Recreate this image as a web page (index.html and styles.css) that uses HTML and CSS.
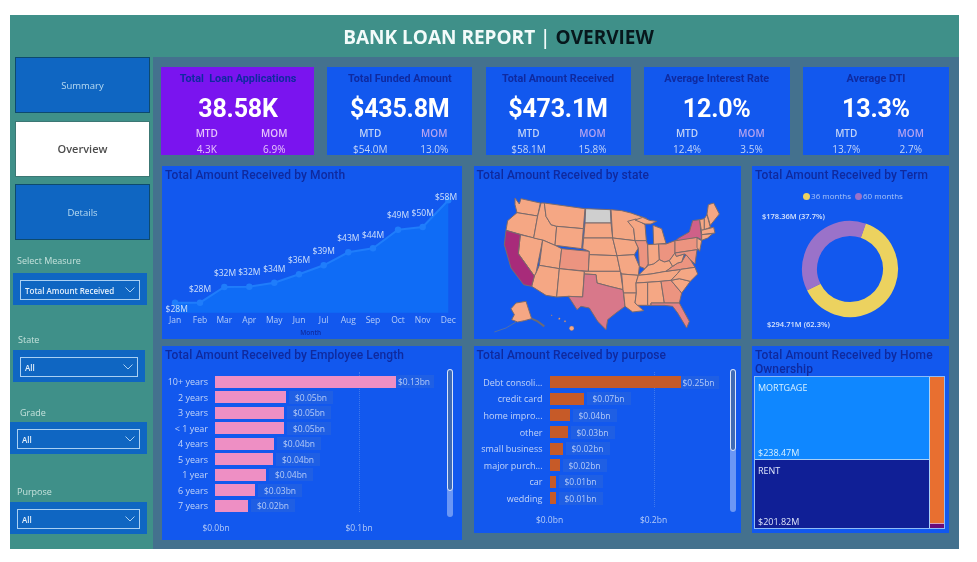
FILE: index.html
```html
<!DOCTYPE html>
<html lang="en">

<head>
    <meta charset="UTF-8">
    <title>Bank Loan Report</title>
    <link rel="stylesheet" href="styles.css">
</head>

<body>
    <div class="report">
        <header class="title-bar">BANK LOAN REPORT <span class="sep">|</span> <span class="title-dark">OVERVIEW</span></header>
        <div class="content">
            <aside class="sidebar">
                <div class="nav-btn">Summary</div>
                <div class="nav-btn active">Overview</div>
                <div class="nav-btn">Details</div>

                <div class="slicer-label measure-label">Select Measure</div>
                <div class="slicer measure-box">
                    <div class="slicer-field"><span>Total Amount Received</span>
                        <svg class="chevron" viewBox="0 0 10 6"><path d="M0.5 0.5 5 5 9.5 0.5"/></svg></div>
                </div>
                <div class="slicer-label state-label">State</div>
                <div class="slicer state-box">
                    <div class="slicer-field"><span>All</span>
                        <svg class="chevron" viewBox="0 0 10 6"><path d="M0.5 0.5 5 5 9.5 0.5"/></svg></div>
                </div>
                <div class="slicer-label grade-label">Grade</div>
                <div class="slicer grade-box">
                    <div class="slicer-field"><span>All</span>
                        <svg class="chevron" viewBox="0 0 10 6"><path d="M0.5 0.5 5 5 9.5 0.5"/></svg></div>
                </div>
                <div class="slicer-label purpose-label">Purpose</div>
                <div class="slicer purpose-box">
                    <div class="slicer-field"><span>All</span>
                        <svg class="chevron" viewBox="0 0 10 6"><path d="M0.5 0.5 5 5 9.5 0.5"/></svg></div>
                </div>
            </aside>

            <main class="main">
                <section class="kpi-row">
                    <div class="kpi kpi-purple">
                        <div class="kpi-title">Total&nbsp; Loan Applications</div>
                        <div class="kpi-value">38.58K</div>
                        <div class="kpi-grid">
                            <span class="mtd">MTD</span><span class="mom">MOM</span>
                            <span class="num">4.3K</span><span class="num">6.9%</span>
                        </div>
                    </div>
                    <div class="kpi">
                        <div class="kpi-title">Total Funded Amount</div>
                        <div class="kpi-value">$435.8M</div>
                        <div class="kpi-grid">
                            <span class="mtd">MTD</span><span class="mom">MOM</span>
                            <span class="num">$54.0M</span><span class="num">13.0%</span>
                        </div>
                    </div>
                    <div class="kpi">
                        <div class="kpi-title">Total Amount Received</div>
                        <div class="kpi-value">$473.1M</div>
                        <div class="kpi-grid">
                            <span class="mtd">MTD</span><span class="mom">MOM</span>
                            <span class="num">$58.1M</span><span class="num">15.8%</span>
                        </div>
                    </div>
                    <div class="kpi">
                        <div class="kpi-title">Average Interest Rate</div>
                        <div class="kpi-value">12.0%</div>
                        <div class="kpi-grid">
                            <span class="mtd">MTD</span><span class="mom">MOM</span>
                            <span class="num">12.4%</span><span class="num">3.5%</span>
                        </div>
                    </div>
                    <div class="kpi">
                        <div class="kpi-title">Average DTI</div>
                        <div class="kpi-value">13.3%</div>
                        <div class="kpi-grid">
                            <span class="mtd">MTD</span><span class="mom">MOM</span>
                            <span class="num">13.7%</span><span class="num">2.7%</span>
                        </div>
                    </div>
                </section>

                <section class="chart-grid">
                    <!-- line chart -->
                    <div class="panel">
                        <h3>Total Amount Received by Month</h3>
                        <svg class="line-chart" viewBox="0 0 300 153">
                            <path class="area" d="M13 114.7 38 114.7 62.3 99 87.3 98.7 112.3 94.7 137 86.3 161.7 77.3 186.3 64.3 211 60.3 236 41.7 260.7 39 286.3 12.3V124.7H13Z"/>
                            <path class="line" d="M13 114.7 38 114.7 62.3 99 87.3 98.7 112.3 94.7 137 86.3 161.7 77.3 186.3 64.3 211 60.3 236 41.7 260.7 39 286.3 12.3"/>
                            <g class="dots">
                                <circle cx="13" cy="114.7" r="3.2"/><circle cx="38" cy="114.7" r="3.2"/><circle cx="62.3" cy="99" r="3.2"/>
                                <circle cx="87.3" cy="98.7" r="3.2"/><circle cx="112.3" cy="94.7" r="3.2"/><circle cx="137" cy="86.3" r="3.2"/>
                                <circle cx="161.7" cy="77.3" r="3.2"/><circle cx="186.3" cy="64.3" r="3.2"/><circle cx="211" cy="60.3" r="3.2"/>
                                <circle cx="236" cy="41.7" r="3.2"/><circle cx="260.7" cy="39" r="3.2"/><circle cx="286.3" cy="12.3" r="3.2"/>
                            </g>
                            <g class="point-labels">
                                <text x="14.7" y="124">$28M</text><text x="38" y="104.3">$28M</text><text x="63" y="88.3">$32M</text>
                                <text x="87.3" y="87">$32M</text><text x="112.3" y="83.7">$34M</text><text x="137" y="75.3">$36M</text>
                                <text x="161.7" y="66">$39M</text><text x="186.3" y="53">$43M</text><text x="211" y="49.7">$44M</text>
                                <text x="236" y="30.3">$49M</text><text x="260.7" y="28.3">$50M</text><text x="284" y="12.3">$58M</text>
                            </g>
                            <g class="month-labels">
                                <text x="13" y="135">Jan</text><text x="38" y="135">Feb</text><text x="62.3" y="135">Mar</text>
                                <text x="87.3" y="135">Apr</text><text x="112.3" y="135">May</text><text x="137" y="135">Jun</text>
                                <text x="161.7" y="135">Jul</text><text x="186.3" y="135">Aug</text><text x="211" y="135">Sep</text>
                                <text x="236" y="135">Oct</text><text x="260.7" y="135">Nov</text><text x="286.3" y="135">Dec</text>
                            </g>
                            <text class="axis-name" x="148.7" y="146.5">Month</text>
                        </svg>
                    </div>

                    <!-- map -->
                    <div class="panel">
                        <h3>Total Amount Received by state</h3>
                        <svg class="us-map" viewBox="0 0 720 450">
                            <path class="aleutian" d="M75 402 45 420 10 432"/>
                            <path class="panhandle" d="M122 392 140 400 160 415"/>
                            <g class="states">
                                <path d="M72 30 85 48 90 32 148 45 140 84 78 74 72 50Z"/>
                                <path d="M78 74 140 84 128 150 45 127 50 98Z"/>
                                <path d="M88 140 155 156 135 255 130 264 82 197Z"/>
                                <path d="M150 45 160 45 165 85 180 110 197 115 192 172 155 156 128 150 140 84Z"/>
                                <path d="M160 45 282 62 277 122 197 115 180 110 165 85Z"/>
                                <path d="M197 115 277 122 272 182 192 172Z"/>
                                <path d="M155 156 192 172 212 182 205 242 145 232Z"/>
                                <path d="M145 232 205 242 197 327 165 322 122 295 130 264 135 255Z"/>
                                <path class="warm" d="M212 182 295 190 292 250 205 242Z"/>
                                <path d="M205 242 280 250 275 327 232 325 197 327Z"/>
                                <path class="none" d="M284 62 358 65 360 105 282 105Z"/>
                                <path d="M282 105 360 105 365 150 278 150Z"/>
                                <path d="M278 150 365 150 378 203 295 200 295 190 275 182Z"/>
                                <path d="M295 200 378 203 388 250 292 250Z"/>
                                <path d="M280 250 388 250 396 305 355 295 318 285 315 260 280 258Z"/>
                                <path class="pink" d="M280 258 315 260 318 285 355 295 396 305 402 355 375 375 350 395 345 425 320 400 295 360 270 355 258 365 232 325 275 327Z"/>
                                <path d="M360 65 392 68 420 75 468 92 432 115 428 122 432 158 365 150Z"/>
                                <path d="M365 150 432 158 442 180 430 200 378 203Z"/>
                                <path d="M378 203 430 200 445 235 442 262 392 258 388 250Z"/>
                                <path d="M392 258 442 262 435 285 436 315 398 315 396 305Z"/>
                                <path d="M398 315 436 315 432 345 440 352 458 368 425 372 402 355Z"/>
                                <path d="M410 100 435 93 462 110 466 158 432 158 428 122Z"/>
                                <path class="warm" d="M432 158 466 158 470 172 472 228 462 242 445 235 442 180Z"/>
                                <path d="M486 112 512 122 525 166 488 170Z"/>
                                <path d="M432 96 455 88 475 97 497 100 480 108 462 108Z"/>
                                <path d="M470 170 503 168 505 215 488 228 472 232Z"/>
                                <path class="warm" d="M503 168 525 168 552 158 552 195 535 218 520 222 505 215Z"/>
                                <path d="M442 262 462 242 472 232 488 228 505 215 520 222 535 218 545 235 525 250 480 258Z"/>
                                <path d="M435 285 442 262 480 258 525 250 570 244 560 256 540 277 510 280Z"/>
                                <path d="M435 285 470 283 470 352 440 352 432 345 436 315Z"/>
                                <path d="M470 283 510 280 520 345 480 345 480 352 470 352Z"/>
                                <path class="warm" d="M510 280 540 277 572 315 565 345 520 345Z"/>
                                <path class="warm2" d="M480 345 520 345 565 345 595 400 587 420 560 375 545 355 520 352 480 352Z"/>
                                <path d="M540 277 565 272 598 280 572 315Z"/>
                                <path class="warm" d="M525 250 545 235 560 225 572 222 585 200 598 215 612 238 570 244Z"/>
                                <path d="M570 244 612 238 620 258 598 280 565 272 540 277 560 256Z"/>
                                <path d="M535 218 552 195 556 205 580 198 572 222 560 225 545 235Z"/>
                                <path class="warm" d="M552 158 560 155 618 148 628 178 618 185 552 195Z"/>
                                <path class="rose" d="M560 152 595 132 605 98 626 95 632 155 618 148 556 158Z"/>
                                <path d="M618 150 632 158 626 190 618 178Z"/>
                                <path class="warm" d="M552 195 618 185 612 228 598 215 585 200 580 198 556 205Z"/>
                                <path d="M626 95 640 92 640 125 631 127Z"/>
                                <path d="M640 92 648 80 658 118 640 125Z"/>
                                <path d="M648 78 652 50 668 45 685 78 658 112Z"/>
                                <path d="M631 127 668 118 672 135 632 140Z"/>
                                <path d="M632 140 665 137 650 150 632 157Z"/>
                                <path class="hot" d="M45 127 88 140 82 197 130 264 122 295 98 290 60 240 40 170Z"/>
                                <path d="M75 345 105 340 122 392 100 398 80 402 62 395 70 380 60 362Z"/>
                                <circle cx="242" cy="421" r="7"/>
                                <circle cx="182" cy="382" r="1.5"/><circle cx="205" cy="392" r="2.5"/><circle cx="222" cy="400" r="2.5"/>
                            </g>
                        </svg>
                    </div>

                    <!-- donut -->
                    <div class="panel">
                        <h3>Total Amount Received by Term</h3>
                        <div class="legend">
                            <span class="legend-dot yellow"></span>36 months
                            <span class="legend-dot purple"></span>60 months
                        </div>
                        <svg class="donut" viewBox="0 0 197 135">
                            <circle class="ring-yellow" cx="98" cy="66" r="40.5" stroke-dasharray="158.5 96" transform="rotate(-71 98 66)"/>
                            <circle class="ring-purple" cx="98" cy="66" r="40.5" stroke-dasharray="96 158.5" transform="rotate(153.3 98 66)"/>
                            <text x="10" y="16">$178.36M (37.7%)</text>
                            <text x="15" y="124">$294.71M (62.3%)</text>
                        </svg>
                    </div>

                    <!-- employee length -->
                    <div class="panel">
                        <h3>Total Amount Received by Employee Length</h3>
                        <div class="bars emp-bars">
                            <div class="bar-row"><span class="bar-label">10+ years</span><span class="bar pink-bar" style="width:181px"></span><span class="bar-value first">$0.13bn</span></div>
                            <div class="bar-row"><span class="bar-label">2 years</span><span class="bar pink-bar" style="width:71px"></span><span class="bar-value">$0.05bn</span></div>
                            <div class="bar-row"><span class="bar-label">3 years</span><span class="bar pink-bar" style="width:69px"></span><span class="bar-value">$0.05bn</span></div>
                            <div class="bar-row"><span class="bar-label">&lt; 1 year</span><span class="bar pink-bar" style="width:69px"></span><span class="bar-value">$0.05bn</span></div>
                            <div class="bar-row"><span class="bar-label">4 years</span><span class="bar pink-bar" style="width:59px"></span><span class="bar-value">$0.04bn</span></div>
                            <div class="bar-row"><span class="bar-label">5 years</span><span class="bar pink-bar" style="width:58px"></span><span class="bar-value">$0.04bn</span></div>
                            <div class="bar-row"><span class="bar-label">1 year</span><span class="bar pink-bar" style="width:51px"></span><span class="bar-value">$0.04bn</span></div>
                            <div class="bar-row"><span class="bar-label">6 years</span><span class="bar pink-bar" style="width:40px"></span><span class="bar-value">$0.03bn</span></div>
                            <div class="bar-row"><span class="bar-label">7 years</span><span class="bar pink-bar" style="width:33px"></span><span class="bar-value">$0.02bn</span></div>
                        </div>
                        <div class="axis emp-axis"><span>$0.0bn</span><span>$0.1bn</span></div>
                        <div class="gridline emp-grid"></div>
                        <div class="scroll emp-scroll"><div class="thumb"></div></div>
                    </div>

                    <!-- purpose -->
                    <div class="panel panel-short">
                        <h3>Total Amount Received by purpose</h3>
                        <div class="bars purpose-bars">
                            <div class="bar-row"><span class="bar-label">Debt consoli...</span><span class="bar rust-bar" style="width:131px"></span><span class="bar-value first">$0.25bn</span></div>
                            <div class="bar-row"><span class="bar-label">credit card</span><span class="bar rust-bar" style="width:34px"></span><span class="bar-value">$0.07bn</span></div>
                            <div class="bar-row"><span class="bar-label">home impro...</span><span class="bar rust-bar" style="width:20px"></span><span class="bar-value">$0.04bn</span></div>
                            <div class="bar-row"><span class="bar-label">other</span><span class="bar rust-bar" style="width:18px"></span><span class="bar-value">$0.03bn</span></div>
                            <div class="bar-row"><span class="bar-label">small business</span><span class="bar rust-bar" style="width:13px"></span><span class="bar-value">$0.02bn</span></div>
                            <div class="bar-row"><span class="bar-label">major purch...</span><span class="bar rust-bar" style="width:10px"></span><span class="bar-value">$0.02bn</span></div>
                            <div class="bar-row"><span class="bar-label">car</span><span class="bar rust-bar" style="width:6px"></span><span class="bar-value">$0.01bn</span></div>
                            <div class="bar-row"><span class="bar-label">wedding</span><span class="bar rust-bar" style="width:6px"></span><span class="bar-value">$0.01bn</span></div>
                        </div>
                        <div class="axis purpose-axis"><span>$0.0bn</span><span>$0.2bn</span></div>
                        <div class="gridline purpose-grid"></div>
                        <div class="scroll purpose-scroll"><div class="thumb"></div></div>
                    </div>

                    <!-- treemap -->
                    <div class="panel panel-short">
                        <h3>Total Amount Received by Home Ownership</h3>
                        <div class="treemap">
                            <div class="tree-main">
                                <div class="tile mortgage"><span>MORTGAGE</span><span>$238.47M</span></div>
                                <div class="tile rent"><span>RENT</span><span>$201.82M</span></div>
                            </div>
                            <div class="tree-side">
                                <div class="tile-other"></div>
                                <div class="tile-own"></div>
                            </div>
                        </div>
                    </div>
                </section>
            </main>
        </div>
    </div>
</body>

</html>
```

FILE: styles.css
```css
body {
    margin: 0;
    background-color: #ffffff;
    font-family: "Open Sans", sans-serif;
}

.report {
    width: 949px;
    height: 534px;
    margin: 15px 0 0 10px;
    display: flex;
    flex-direction: column;
    background-color: #44718e;
    filter: blur(0.4px);
}

.title-bar {
    height: 42px;
    box-sizing: border-box;
    padding-left: 28px;
    background-color: #3f9089;
    color: #f2fbfa;
    font-size: 19px;
    font-weight: 700;
    line-height: 44px;
    text-align: center;
}

.sep {
    font-weight: 600;
}

.title-dark {
    color: #07171c;
}

.content {
    flex: 1;
    display: flex;
}

.sidebar {
    width: 143px;
    flex: none;
    background-color: #3f9089;
    display: flex;
    flex-direction: column;
}

.nav-btn {
    width: 135px;
    height: 56px;
    margin: 0 0 7.5px 5px;
    box-sizing: border-box;
    background-color: #0f66c2;
    border: 1px solid #0d4a6e;
    color: #b9dcf2;
    font-size: 9.5px;
    display: flex;
    align-items: center;
    justify-content: center;
}

.nav-btn.active {
    background-color: #ffffff;
    border-color: #3c7774;
    color: #4d4d4d;
    font-size: 11px;
    font-weight: 600;
}

.slicer-label {
    color: #c5e2dc;
    font-size: 9px;
    line-height: 12px;
}

.measure-label {
    margin: 7.5px 0 0 7px;
}

.state-label {
    margin: 29px 0 0 8px;
}

.grade-label {
    margin: 25px 0 0 10px;
}

.purpose-label {
    margin: 32px 0 0 7px;
}

.slicer {
    background-color: #0f66c2;
    box-sizing: border-box;
    height: 32px;
    padding: 7px 7px 4px;
}

.measure-box {
    width: 134px;
    margin: 6px 0 0 3px;
}

.state-box {
    width: 132px;
    margin: 4px 0 0 3px;
}

.grade-box {
    width: 137px;
    margin-top: 3px;
}

.purpose-box {
    width: 137px;
    margin-top: 4px;
}

.slicer-field {
    height: 20px;
    box-sizing: border-box;
    border: 1px solid #a9d0f3;
    color: #e4f0fb;
    font-size: 8px;
    font-weight: 600;
    padding: 0 4px;
    display: flex;
    align-items: center;
    justify-content: space-between;
}

.chevron {
    width: 10px;
    height: 6px;
    fill: none;
    stroke: #a9d0f3;
    stroke-width: 1;
}

.main {
    flex: 1;
    padding: 10px 10px 0 8px;
}

.kpi-row {
    display: grid;
    grid-template-columns: 153px 145px 145px 146px 146px;
    column-gap: 13.25px;
    height: 88px;
}

.kpi {
    background-color: #1258ee;
    text-align: center;
    padding: 5px 6px 0 11px;
    box-sizing: border-box;
    overflow: hidden;
}

.kpi-purple {
    background-color: #7a14ef;
    padding: 5px 6px 0 12px;
}

.kpi-title {
    margin-left: -6px;
    margin-right: -1px;
    color: #0f2aa0;
    font-family: "Roboto", sans-serif;
    font-size: 10.8px;
    font-weight: 700;
    line-height: 13px;
    white-space: nowrap;
}

.kpi-value {
    margin-left: -5px;
    color: #ffffff;
    font-family: "Roboto", sans-serif;
    font-size: 25px;
    font-weight: 700;
    line-height: 30px;
    margin-top: 9px;
    letter-spacing: -0.2px;
}

.kpi-grid {
    display: grid;
    grid-template-columns: 1fr 1fr;
    margin-top: 2px;
    font-size: 10px;
    line-height: 15.5px;
}

.mtd {
    color: #c3d4f7;
    font-weight: 600;
}

.mom {
    color: #b7a4f0;
    font-weight: 600;
}

.num {
    color: #c3d4f7;
}

.kpi-purple .mtd,
.kpi-purple .mom,
.kpi-purple .num {
    color: #e5c3fb;
}

.chart-grid {
    display: grid;
    grid-template-columns: 300px 267px 197px;
    grid-template-rows: 173px 194px;
    column-gap: 11.5px;
    row-gap: 7px;
    margin: 11px 0 0 1px;
}

.panel {
    position: relative;
    background-color: #1258ee;
    overflow: hidden;
}

.panel-short {
    height: 187px;
}

.panel h3 {
    margin: 0;
    padding: 2px 3px 0 3px;
    color: #0f2a9e;
    font-family: "Roboto", sans-serif;
    font-size: 12px;
    font-weight: 500;
    letter-spacing: 0.1px;
    line-height: 14px;
    min-height: 18px;
}

.line-chart {
    display: block;
    width: 300px;
    height: 153px;
    margin-top: 2px;
}

.area {
    fill: #0f6cf6;
}

.line {
    fill: none;
    stroke: #1f7dfb;
    stroke-width: 2;
}

.dots circle {
    fill: #1f7dfb;
}

.line-chart text {
    font-size: 8.5px;
    text-anchor: middle;
    fill: #cfe0fb;
}

.line-chart .month-labels text {
    fill: #b4ccf8;
    font-size: 8.5px;
}

.line-chart .axis-name {
    fill: #0f2a9e;
    font-size: 6.5px;
    font-weight: 600;
}

.us-map {
    display: block;
    width: 240px;
    height: 150px;
    margin: 2px 0 0 17px;
}

.states path,
.states circle {
    fill: #f5a784;
    stroke: #7c6b6a;
    stroke-width: 3;
    stroke-linejoin: round;
}

.states circle {
    stroke-width: 1;
}

.aleutian {
    fill: none;
    stroke: #4f6fa8;
    stroke-width: 3;
}

.panhandle {
    fill: none;
    stroke: #6a6a78;
    stroke-width: 6;
}

.states .warm {
    fill: #ec9480;
}

.states .warm2 {
    fill: #e58487;
}

.states .pink {
    fill: #d8788a;
}

.states .rose {
    fill: #cf6088;
}

.states .hot {
    fill: #a82b7a;
}

.states .none {
    fill: #cfcfcf;
}

.legend {
    display: flex;
    align-items: center;
    justify-content: center;
    color: #a9c4f7;
    font-size: 8px;
    line-height: 14px;
    height: 14px;
    margin-top: 3px;
    padding-left: 1px;
}

.legend-dot {
    width: 7px;
    height: 7px;
    border-radius: 50%;
    margin: 0 1px 0 4px;
}

.legend-dot.yellow {
    background-color: #ecd25f;
}

.legend-dot.purple {
    background-color: #9a72c9;
}

.donut {
    display: block;
    width: 197px;
    height: 135px;
}

.ring-yellow,
.ring-purple {
    fill: none;
    stroke-width: 15;
}

.ring-yellow {
    stroke: #ecd25f;
}

.ring-purple {
    stroke: #9a72c9;
}

.donut text {
    fill: #d6e3fb;
    font-size: 7.5px;
    font-weight: 600;
}

.bars {
    position: relative;
    z-index: 1;
    margin-top: 8px;
}

.bar-row {
    display: flex;
    align-items: center;
}

.emp-bars .bar-row {
    height: 15.5px;
}

.purpose-bars .bar-row {
    height: 16.6px;
}

.bar-label {
    flex: none;
    text-align: right;
    color: #c3d4f7;
    font-size: 9px;
    white-space: nowrap;
}

.emp-bars .bar-label {
    width: 46px;
    margin-right: 7px;
}

.purpose-bars .bar-label {
    width: 69px;
    margin-right: 7px;
}

.bar {
    flex: none;
    height: 12px;
}

.pink-bar {
    background-color: #ee8fc4;
}

.rust-bar {
    background-color: #c65a28;
}

.bar-value {
    margin-left: 3px;
    padding: 0 6px;
    background-color: #1f5fe4;
    color: #b5cbf7;
    font-size: 8.5px;
    line-height: 13px;
}

.bar-value.first {
    margin-left: 0;
    padding-left: 2px;
    padding-right: 4px;
}

.axis {
    display: flex;
    color: #b5cbf7;
    font-size: 8.5px;
    line-height: 12px;
    text-align: center;
}

.axis span {
    flex: none;
    width: 60px;
}

.emp-axis {
    margin: 8px 0 0 24px;
    gap: 83px;
}

.purpose-axis {
    margin: 7px 0 0 46px;
    gap: 44px;
}

.gridline {
    position: absolute;
    width: 0;
    border-left: 1px dotted #3f78ec;
}

.emp-grid {
    left: 197px;
    top: 26px;
    height: 140px;
}

.purpose-grid {
    left: 180px;
    top: 26px;
    height: 135px;
}

.scroll {
    position: absolute;
    width: 6px;
    border-radius: 3px;
    background-color: #6b97f5;
}

.thumb {
    box-sizing: border-box;
    width: 6px;
    border: 1.5px solid #dbe6fb;
    border-radius: 3px;
    background-color: #3f6bb5;
}

.emp-scroll {
    left: 285px;
    top: 23px;
    height: 148px;
}

.emp-scroll .thumb {
    height: 122px;
}

.purpose-scroll {
    left: 256px;
    top: 23px;
    height: 143px;
}

.purpose-scroll .thumb {
    height: 82px;
}

.treemap {
    display: flex;
    width: 191px;
    height: 153px;
    margin: 0 0 0 2px;
    box-sizing: border-box;
    border: 1.5px solid #8fbcf7;
}

.tree-main {
    flex: 1;
    display: flex;
    flex-direction: column;
}

.tile {
    display: flex;
    flex-direction: column;
    justify-content: space-between;
    box-sizing: border-box;
    padding: 4px 3px 0;
    font-size: 9px;
    line-height: 13px;
    color: #d7f0ff;
}

.mortgage {
    height: 83px;
    background-color: #0f87ff;
    border-bottom: 1.5px solid #a9d0f7;
}

.rent {
    flex: 1;
    background-color: #101f96;
    color: #dfe6fb;
}

.tree-side {
    width: 14px;
    display: flex;
    flex-direction: column;
    border-left: 1.5px solid #a9d0f7;
}

.tile-other {
    flex: 1;
    background-color: #e86f30;
    border-bottom: 1px solid #d8a0c0;
}

.tile-own {
    height: 4px;
    background-color: #6a0a7a;
}
```
